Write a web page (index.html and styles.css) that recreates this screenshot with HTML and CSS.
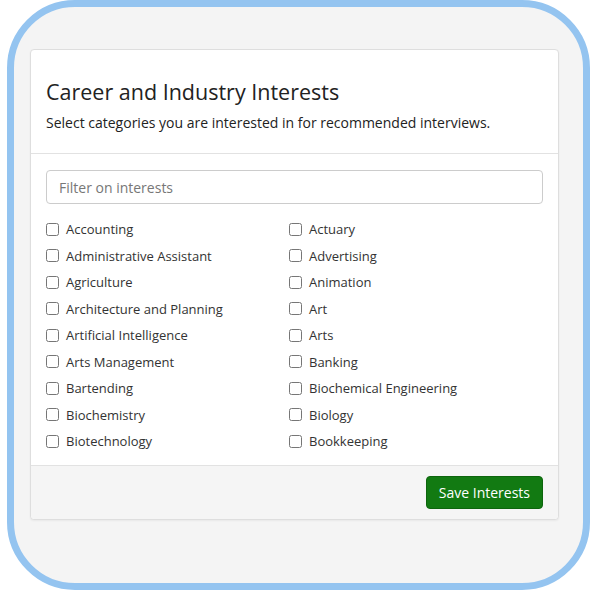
FILE: index.html
```html
<!DOCTYPE html>
<html lang="en">
<head>
    <meta charset="UTF-8">
    <meta name="viewport" content="width=device-width, initial-scale=1.0">
    <title>Career and Industry Interests</title>
    <link rel="stylesheet" href="styles.css">
</head>
<body>
    <div class="frame">
        <div class="card">
            <div class="card-header">
                <h1>Career and Industry Interests</h1>
                <p>Select categories you are interested in for recommended interviews.</p>
            </div>
            <div class="card-body">
                <input type="text" class="filter" placeholder="Filter on interests">
                <div class="interests">
                    <label class="item"><input type="checkbox"><span>Accounting</span></label>
                    <label class="item"><input type="checkbox"><span>Actuary</span></label>
                    <label class="item"><input type="checkbox"><span>Administrative Assistant</span></label>
                    <label class="item"><input type="checkbox"><span>Advertising</span></label>
                    <label class="item"><input type="checkbox"><span>Agriculture</span></label>
                    <label class="item"><input type="checkbox"><span>Animation</span></label>
                    <label class="item"><input type="checkbox"><span>Architecture and Planning</span></label>
                    <label class="item"><input type="checkbox"><span>Art</span></label>
                    <label class="item"><input type="checkbox"><span>Artificial Intelligence</span></label>
                    <label class="item"><input type="checkbox"><span>Arts</span></label>
                    <label class="item"><input type="checkbox"><span>Arts Management</span></label>
                    <label class="item"><input type="checkbox"><span>Banking</span></label>
                    <label class="item"><input type="checkbox"><span>Bartending</span></label>
                    <label class="item"><input type="checkbox"><span>Biochemical Engineering</span></label>
                    <label class="item"><input type="checkbox"><span>Biochemistry</span></label>
                    <label class="item"><input type="checkbox"><span>Biology</span></label>
                    <label class="item"><input type="checkbox"><span>Biotechnology</span></label>
                    <label class="item"><input type="checkbox"><span>Bookkeeping</span></label>
                </div>
            </div>
            <div class="card-footer">
                <button type="button" class="button">Save Interests</button>
            </div>
        </div>
    </div>
</body>
</html>
```

FILE: styles.css
```css
body {
    font-family: "Open Sans", Arial, sans-serif;
    background: #fff;
    margin: 0;
    padding: 0 10px 0 7px;
    color: #333;
}
.frame {
    box-sizing: border-box;
    height: 590px;
    border: 7px solid #94c4f0;
    border-radius: 68px;
    background: #f4f4f4;
    padding: 42px 24px 0 16px;
}
.card {
    background: #fff;
    border: 1px solid #dedede;
    border-radius: 4px;
    box-shadow: 0 1px 2px rgba(0, 0, 0, 0.05);
}
.card-header {
    padding: 27px 15px 20px;
    border-bottom: 1px solid #e2e2e2;
}
.card-header h1 {
    margin: 0;
    font-size: 21.5px;
    font-weight: 400;
    line-height: 30px;
    color: #222;
}
.card-header p {
    margin: 6px 0 0;
    font-size: 14px;
    line-height: 20px;
    color: #222;
}
.card-body {
    padding: 16px 15px 10px;
}
.filter {
    display: block;
    box-sizing: border-box;
    width: 100%;
    height: 34px;
    padding: 6px 12px;
    border: 1px solid #ccc;
    border-radius: 4px;
    font-family: inherit;
    font-size: 14px;
    color: #333;
}
.filter::placeholder {
    color: #777;
}
.interests {
    display: grid;
    grid-template-columns: 243px 1fr;
    margin-top: 12px;
}
.item {
    display: flex;
    align-items: center;
    height: 26.5px;
    font-size: 13px;
    color: #333;
}
.item input {
    margin: 0 7px 0 0;
    width: 13px;
    height: 13px;
}
.card-footer {
    background: #f5f5f5;
    border-top: 1px solid #e2e2e2;
    padding: 10px 15px;
    display: flex;
    justify-content: flex-end;
    border-radius: 0 0 4px 4px;
}
.button {
    background-color: #127a12;
    color: #fff;
    border: 1px solid #0d650d;
    border-radius: 4px;
    padding: 6px 12px;
    font-family: inherit;
    font-size: 14px;
    line-height: 19px;
    cursor: pointer;
}
```
